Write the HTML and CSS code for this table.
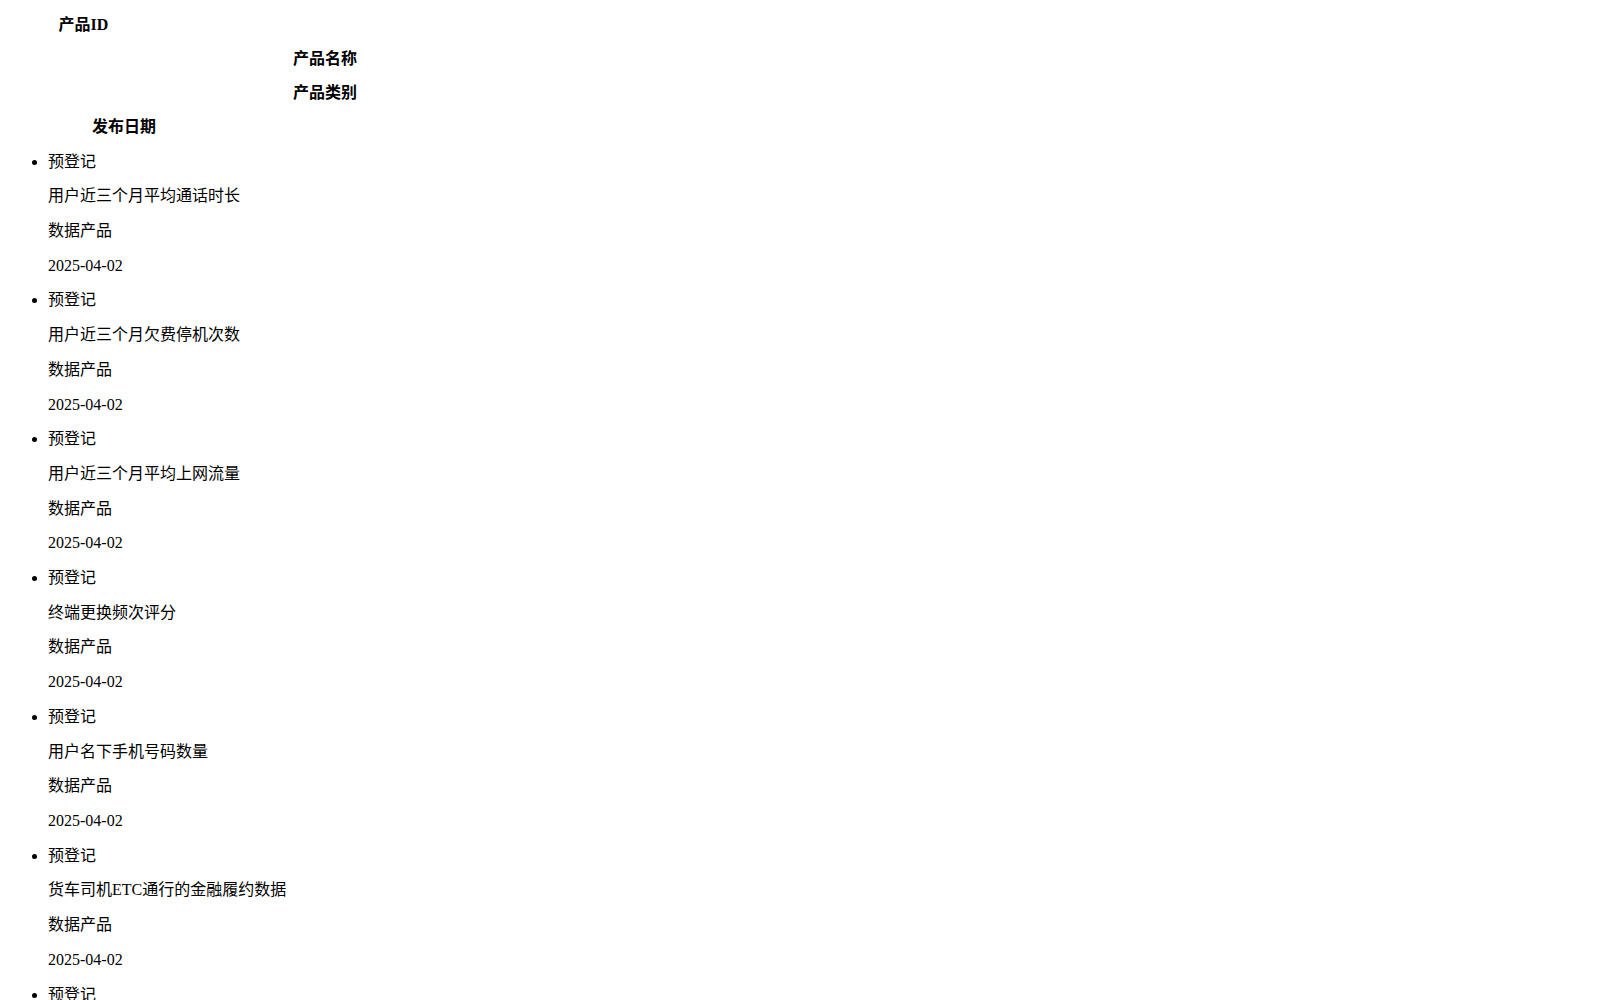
FILE: index.html
```html
<!DOCTYPE html>
<html lang="zh-CN">
<head>
<meta charset="utf-8">
<title>产品列表</title>
<link rel="stylesheet" href="styles.css">
</head>
<body>
<div class="head">
  <div class="th th-id">产品ID</div>
  <div class="th th-name">产品名称</div>
  <div class="th th-name">产品类别</div>
  <div class="th th-date">发布日期</div>
</div>
<ul class="list">
  <li><p>预登记</p><p>用户近三个月平均通话时长</p><p>数据产品</p><p>2025-04-02</p></li>
  <li><p>预登记</p><p>用户近三个月欠费停机次数</p><p>数据产品</p><p>2025-04-02</p></li>
  <li><p>预登记</p><p>用户近三个月平均上网流量</p><p>数据产品</p><p>2025-04-02</p></li>
  <li><p>预登记</p><p>终端更换频次评分</p><p>数据产品</p><p>2025-04-02</p></li>
  <li><p>预登记</p><p>用户名下手机号码数量</p><p>数据产品</p><p>2025-04-02</p></li>
  <li><p>预登记</p><p>货车司机ETC通行的金融履约数据</p><p>数据产品</p><p>2025-04-02</p></li>
  <li><p>预登记</p><p>用户在网时长</p><p>数据产品</p><p>2025-04-02</p></li>
  <li><p>预登记</p><p>用户近三个月话费消费金额</p><p>数据产品</p><p>2025-04-02</p></li>
  <li><p>预登记</p><p>手机号码状态查询</p><p>数据产品</p><p>2025-04-02</p></li>
  <li><p>预登记</p><p>用户实名认证核验</p><p>数据产品</p><p>2025-04-02</p></li>
  <li><p>预登记</p><p>企业用电量指数</p><p>数据产品</p><p>2025-04-02</p></li>
  <li><p>预登记</p><p>企业纳税信用评级</p><p>数据产品</p><p>2025-04-02</p></li>
</ul>
</body>
</html>
```

FILE: styles.css
```css
html {
  overflow-y: scroll;
}

body {
  margin: 8px;
  font-family: "Liberation Serif", "Noto Sans CJK SC", serif;
  font-size: 16px;
  color: #000;
  background: #fff;
}

.th {
  margin: 16px 0;
  font-weight: bold;
  line-height: 17.9px;
  text-align: center;
}

.th-id {
  width: 151px;
  margin-top: 8px;
}
.th-name { width: 634px; }
.th-date { width: 232px; }

.list {
  margin: 17px 0 16px;
  padding-left: 40px;
  list-style: disc;
}

.list p {
  margin: 16px 0;
  line-height: 18.7px;
}
```
